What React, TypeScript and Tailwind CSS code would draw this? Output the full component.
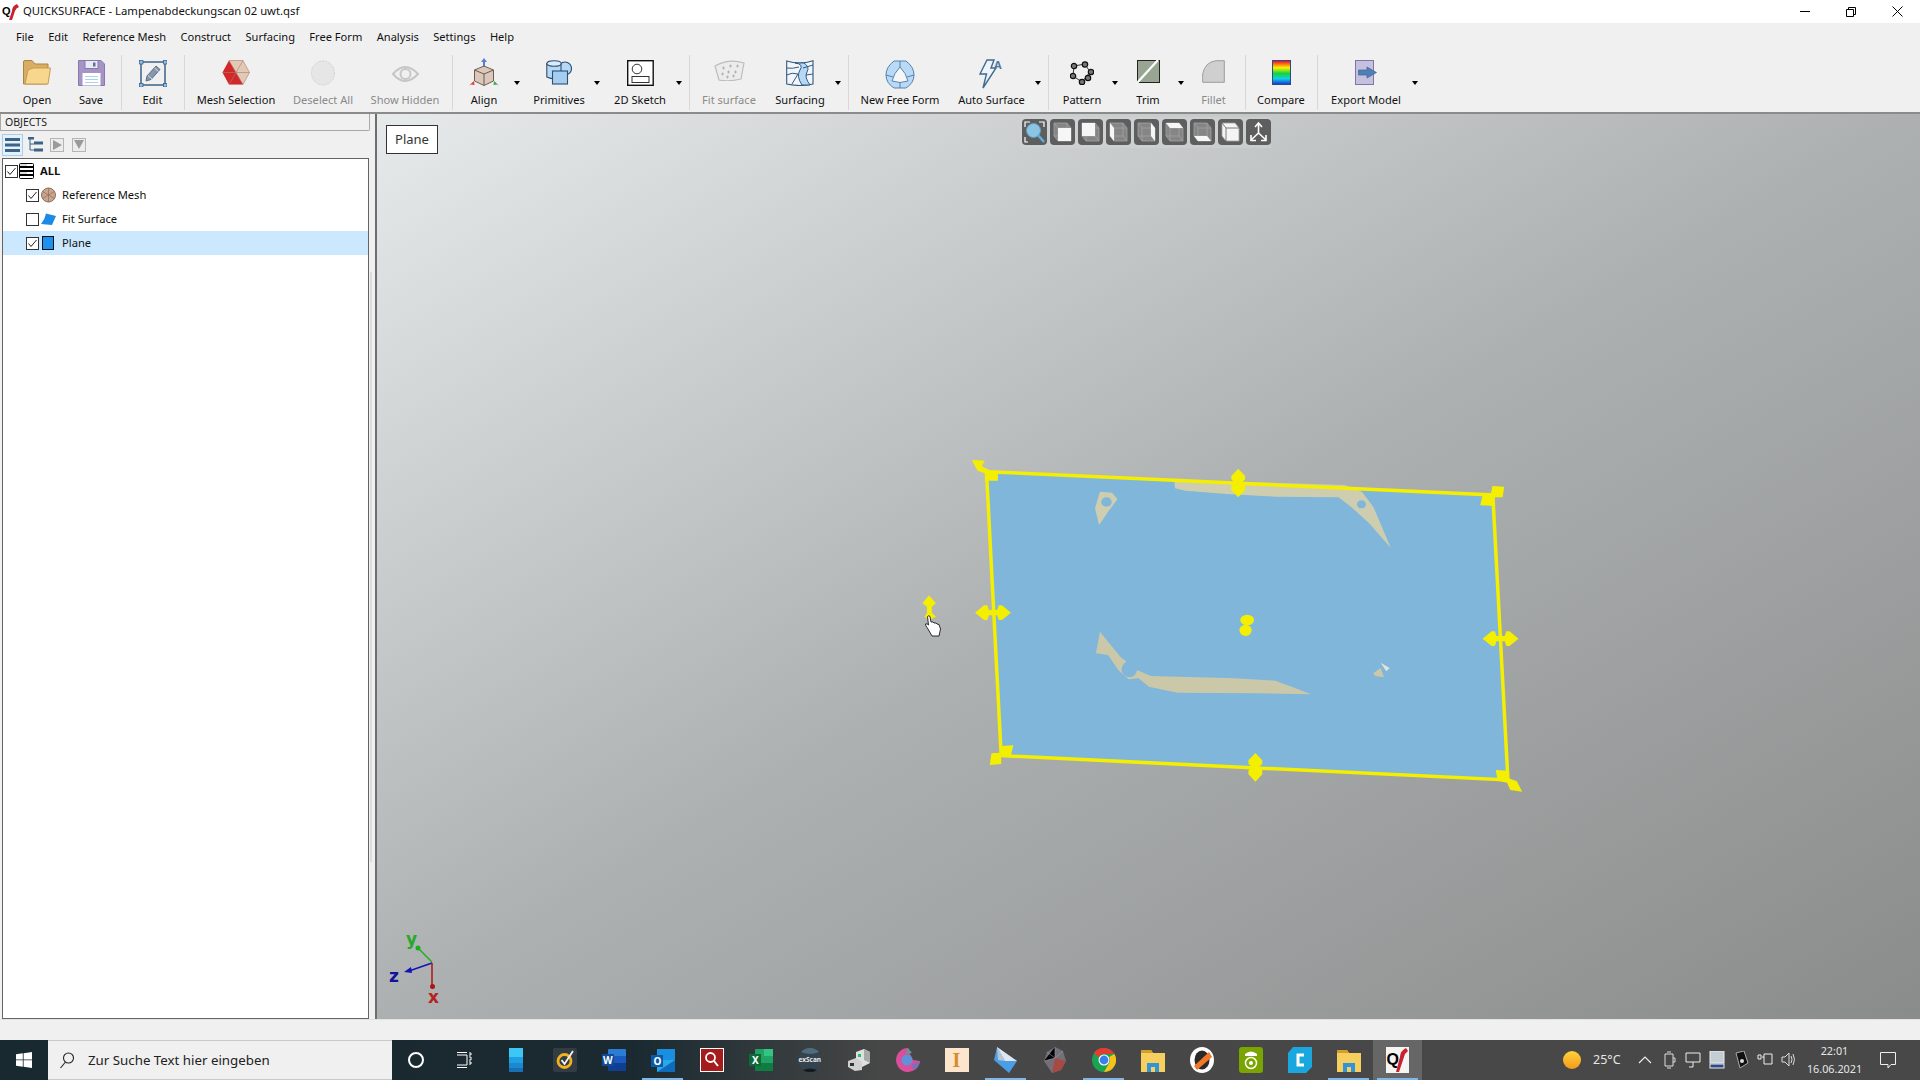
import type { ReactNode } from 'react';

const uiFont = "font-['Noto_Sans','Open_Sans',sans-serif]";

const menus = ['File', 'Edit', 'Reference Mesh', 'Construct', 'Surfacing', 'Free Form', 'Analysis', 'Settings', 'Help'];

const Sep = () => (
  <div className="w-[6px] h-[55px] mt-[5px] flex justify-center">
    <div className="w-px h-full bg-[#d8d8d8]" />
  </div>
);

const Caret = () => (
  <div className="w-[8px] h-full flex justify-center pt-[31px]">
    <div className="w-0 h-0 border-x-[3.5px] border-x-transparent border-t-[4px] border-t-black" />
  </div>
);

const Tool = ({ label, className, dim, children }: { label: string; className: string; dim?: boolean; children: ReactNode }) => (
  <div className={`h-full flex flex-col items-center shrink-0 ${className}`}>
    <div className="h-[36px] pt-[10px] flex justify-center">{children}</div>
    <div className={`text-[11.1px] leading-[16px] mt-[6px] whitespace-nowrap ${dim ? 'text-[#8a8a8a]' : 'text-[#111]'}`}>{label}</div>
  </div>
);

const IconOpen = () => (
  <svg width="28" height="25" viewBox="0 0 28 25">
    <path d="M0.500 24 V2 Q0.500 0.500 2 0.500 H9 L12 4 H25 V9 H26 L24 24 Z" fill="#d9ae62" stroke="#a98544" />
    <path d="M2 24 L5 10 L10 8 H27.500 L25 24 Z" fill="#f8d68e" stroke="#c49c55" />
  </svg>
);

const IconSave = () => (
  <svg width="27" height="26" viewBox="0 0 27 26">
    <path d="M0.500 0.500 H23 L26.500 4 V25.500 H0.500 Z" fill="#a594c6" stroke="#8a78ad" />
    <rect x="7" y="0.500" width="13" height="8" fill="#e6ecf4" stroke="#8a78ad" />
    <rect x="15" y="2.500" width="2.500" height="4" fill="#6d6a8a" />
    <rect x="4.500" y="13" width="18" height="12.500" fill="#fff" />
    <path d="M7 16.500 H20 M7 19.500 H20 M7 22.500 H20" stroke="#a9d4ee" />
  </svg>
);

const IconEdit = () => (
  <svg width="28" height="27" viewBox="0 0 28 27">
    <rect x="2" y="2" width="24" height="23" fill="none" stroke="#33587f" strokeWidth="1.400" />
    {[[2, 2], [26, 2], [2, 25], [26, 25]].map(([x, y]) => (
      <rect key={`${x}-${y}`} x={x - 1.500} y={y - 1.500} width="3.500" height="3.500" fill="#8fc0ea" stroke="#33587f" strokeWidth="0.700" />
    ))}
    <path d="M7 21 L8 16 L17 6 L21 9.500 L12 19.500 Z" fill="#8497ad" stroke="#5d7088" strokeWidth="1" />
    <path d="M9 15.500 L13 19 M15.500 8 L19.500 11.500" stroke="#e8edf2" strokeWidth="0.800" />
  </svg>
);

const IconMesh = () => (
  <svg width="28" height="25" viewBox="0 0 28 25">
    <path d="M7 0.500 H21 L27.500 12.500 L21 24.500 H7 L0.500 12.500 Z" fill="#e2c8b6" />
    <path d="M7 0.500 L14 12.500 L21 24.500 H7 L0.500 12.500 Z" fill="#d3282a" />
    <path d="M14 12.500 H27.500 M0.500 12.500 H14 M14 12.500 L21 0.500 M14 12.500 L21 24.500 M7 0.500 L14 12.500 L7 24.500 M7 0.500 H21 L27.500 12.500 L21 24.500" stroke="#a8806f" strokeWidth="0.600" fill="none" />
  </svg>
);

const IconDeselect = () => (
  <svg width="26" height="26" viewBox="0 0 26 26">
    <ellipse cx="13" cy="13" rx="11.500" ry="12" fill="#e6e6e6" stroke="#d2d2d2" strokeDasharray="2 1" />
  </svg>
);

const IconEye = () => (
  <svg width="27" height="18" viewBox="0 0 27 18">
    <path d="M1 9 Q13 -5 26 9 Q13 23 1 9 Z" fill="none" stroke="#c6c6c6" strokeWidth="2" />
    <circle cx="13.500" cy="9" r="5" fill="none" stroke="#c6c6c6" strokeWidth="2" />
  </svg>
);

const IconAlign = () => (
  <svg width="32" height="28" viewBox="0 0 32 28" className="-mt-[2px]">
    <path d="M16 0 L19 4 H17 V9 H15 V4 H13 Z" fill="#5a7fd0" />
    <path d="M16 8 L25.500 12 V23 L16 27.500 L6.500 23 V12 Z" fill="#dcc8ba" stroke="#5f4f45" strokeWidth="0.900" />
    <path d="M6.500 12 L16 16 L25.500 12 M16 16 V27.500" fill="none" stroke="#5f4f45" strokeWidth="0.900" />
    <path d="M1 27.500 L6 23 L6.500 27 L3 26.500 Z" fill="#e0403a" />
    <path d="M31 27.500 L26 23 L25.500 27 L29 26.500 Z" fill="#3fa84a" />
  </svg>
);

const IconPrimitives = () => (
  <svg width="26" height="25" viewBox="0 0 26 25">
    <circle cx="19" cy="8.500" r="6.500" fill="#b5d8f5" stroke="#2f4f70" strokeWidth="1.100" />
    <path d="M0.800 3.500 V17 Q7 20 15 18 V3.500 Z" fill="#b5d8f5" stroke="#2f4f70" strokeWidth="1.100" />
    <ellipse cx="8" cy="3.500" rx="7.200" ry="2.800" fill="#d8ecfb" stroke="#2f4f70" strokeWidth="1.100" />
    <rect x="6.500" y="11" width="15" height="13" fill="#a5cdf0" stroke="#2f4f70" strokeWidth="1.100" />
  </svg>
);

const IconSketch = () => (
  <svg width="27" height="26" viewBox="0 0 27 26">
    <rect x="0.700" y="0.700" width="25.500" height="24.600" fill="#fff" stroke="#111" strokeWidth="1.400" />
    <circle cx="10" cy="9" r="4.800" fill="none" stroke="#333" />
    <rect x="5" y="16.500" width="17" height="6" fill="none" stroke="#333" />
  </svg>
);

const IconFit = () => (
  <svg width="31" height="21" viewBox="0 0 31 21">
    <path d="M1 6 Q15 -2 30 3 L27 19 Q15 22 5 20 Z" fill="#ececec" stroke="#bdbdbd" strokeWidth="1.200" />
    <path d="M8 8 h3 M9.500 6.500 v3 M15 6 h3 M16.500 4.500 v3 M22 6 h3 M23.500 4.500 v3 M7 14 h3 M8.500 12.500 v3 M13 12 h3 M14.500 10.500 v3 M20 12 h3 M21.500 10.500 v3 M12 17 h3 M13.500 15.500 v3 M18 16 h3 M19.500 14.500 v3" stroke="#a8a8a8" strokeWidth="0.800" />
  </svg>
);

const IconSurfacing = () => (
  <svg width="28" height="26" viewBox="0 0 28 26">
    <path d="M0.700 1 Q14 5 27 0.700 V24 Q14 27 0.700 24 Z" fill="#f2f6fa" stroke="#33587f" strokeWidth="1.100" />
    <path d="M9 3 Q18 4 14 10 Q10 16 16 25 H24 Q18 17 21 12 Q24 7 18 3 Z" fill="#b5d8f5" stroke="#33587f" />
    <path d="M0.700 8 Q6 9 13 7 M0.700 15 Q6 12 12 14 L6 24 M17 8 L27 5 M20 15 L27 14" fill="none" stroke="#33587f" />
  </svg>
);

const IconFreeForm = () => (
  <svg width="30" height="29" viewBox="0 0 30 29">
    <path d="M9 1 H21 Q29 7 29 15 Q29 23 21 28 H9 Q1 23 1 15 Q1 7 9 1 Z" fill="#b8daf7" stroke="#5582ad" />
    <path d="M15 7 Q21 13 23 21 Q15 24 7 21 Q9 13 15 7 Z" fill="#f6f6f6" stroke="#5582ad" />
    <path d="M15 1 V7 M1 15 L8 17 M29 15 L22 17 M15 23 V28" stroke="#5582ad" fill="none" />
  </svg>
);

const IconAuto = () => (
  <svg width="26" height="30" viewBox="0 0 26 30" className="-mt-[1px]">
    <path d="M8 1 H15 L12 9 H17 L4 29 L7.500 15 H1 Z" fill="#eef4fa" stroke="#3f6a91" strokeWidth="1.400" />
    <text x="15" y="10" fontSize="11" fontWeight="700" fill="#4d7aa5" fontFamily="Noto Sans, sans-serif">A</text>
  </svg>
);

const IconPattern = () => (
  <svg width="24" height="24" viewBox="0 0 24 24" className="mt-px">
    <path d="M4 5 L15 3 L20 11 L12 21 L3 15 Z" fill="none" stroke="#222" strokeWidth="0.900" />
    {[[4, 5], [15, 3.500], [21, 11], [18, 17], [12, 21], [3, 15]].map(([x, y]) => (
      <circle key={`${x}-${y}`} cx={x} cy={y} r="2.700" fill="#777" stroke="#111" strokeWidth="1.200" />
    ))}
  </svg>
);

const IconTrim = () => (
  <svg width="23" height="23" viewBox="0 0 23 23">
    <rect x="0.500" y="0.500" width="22" height="22" fill="#97a592" stroke="#222" />
    <path d="M21 0 L0 23" stroke="#fff" strokeWidth="2.200" />
  </svg>
);

const IconFillet = () => (
  <svg width="23" height="23" viewBox="0 0 23 23">
    <path d="M0.700 22.300 V14 Q3 2 14 0.700 H22.300 V22.300 Z" fill="#cfcfcf" stroke="#9d9d9d" />
  </svg>
);

const IconCompare = () => (
  <svg width="19" height="25" viewBox="0 0 19 25">
    <defs>
      <linearGradient id="rainbow" x1="0" y1="0" x2="0" y2="1">
        <stop offset="0.040" stopColor="#ee1c25" />
        <stop offset="0.300" stopColor="#fdf100" />
        <stop offset="0.540" stopColor="#12d43a" />
        <stop offset="0.760" stopColor="#10cfe8" />
        <stop offset="1" stopColor="#1a2cd0" />
      </linearGradient>
    </defs>
    <rect x="0.500" y="0.500" width="18" height="24" fill="url(#rainbow)" stroke="#2a4a8a" />
  </svg>
);

const IconExport = () => (
  <svg width="22" height="25" viewBox="0 0 22 25">
    <rect x="0.500" y="0.500" width="18" height="24" fill="#c4c0de" stroke="#8473a8" />
    <path d="M3.500 10 H12 V7 L21.500 12.500 L12 18 V15 H3.500 Z" fill="#4f7fb5" stroke="#3d6897" strokeWidth="0.700" />
  </svg>
);

const CheckBox = ({ on }: { on: boolean }) => (
  <div className="w-[13px] h-[13px] border border-[#333] bg-white shrink-0 flex items-center justify-center">
    {on && (
      <svg width="11" height="11" viewBox="0 0 11 11">
        <path d="M1.500 5.500 L4 8.500 L9.500 2" fill="none" stroke="#222" strokeWidth="1" />
      </svg>
    )}
  </div>
);

const viewFaces = [
  '8,9 21,9 21,22 8,22',
  '4,4 17,4 17,17 4,17',
  '4,4 8,9 8,22 4,17',
  '17,4 21,9 21,22 17,17',
  '4,4 17,4 21,9 8,9',
  '8,22 21,22 17,17 4,17',
];

const ViewCube = ({ face, iso }: { face?: string; iso?: boolean }) => (
  <div className="w-[25px] h-[26px] rounded-[4px] bg-[#5e5e5e] mr-[3px] shrink-0">
    <svg width="25" height="26" viewBox="0 0 25 26">
      <polygon points="4,4 17,4 21,9 21,22 8,22 4,17" fill={iso ? '#f4f4f4' : '#858585'} stroke="#a2a2a2" strokeWidth="0.800" />
      <path d="M8 22 V9 H21 M8 9 L4 4" stroke={iso ? '#5e5e5e' : '#a2a2a2'} strokeWidth="0.800" fill="none" />
      {!iso && <path d="M4 17 H17 V4 M17 17 L21 22" stroke="#a2a2a2" strokeWidth="0.800" fill="none" />}
      {face && <polygon points={face} fill="#f6f6f6" />}
    </svg>
  </div>
);

const VArrow = ({ x, y }: { x: number; y: number }) => (
  <polygon
    fill="#f4ee00"
    points={`${x},${y - 44} ${x + 17},${y - 22} ${x + 17},${y - 12} ${x + 9},${y - 2} ${x + 17},${y + 8} ${x + 17},${y + 20} ${x},${y + 42} ${x - 17},${y + 20} ${x - 17},${y + 8} ${x - 9},${y - 2} ${x - 17},${y - 12} ${x - 17},${y - 22}`}
  />
);

const HArrow = ({ x, y }: { x: number; y: number }) => (
  <polygon
    fill="#f4ee00"
    points={`${x - 44},${y} ${x - 22},${y - 22} ${x - 14},${y - 22} ${x - 10},${y - 8} ${x + 10},${y - 8} ${x + 14},${y - 22} ${x + 22},${y - 22} ${x + 44},${y} ${x + 22},${y + 22} ${x + 14},${y + 22} ${x + 10},${y + 8} ${x - 10},${y + 8} ${x - 14},${y + 22} ${x - 22},${y + 22}`}
  />
);

// the scene is written in the coordinates of the crop: 1 unit = 0.408px wide, 0.333px high
const Scene = () => (
  <svg className="absolute inset-0 w-full h-full" viewBox="377 114 1543 905">
    <g transform="translate(900 440) scale(0.408 0.3333)">
      <polygon points="212,95 1453,165 1490,1020 248,947" fill="#80b6d9" />
      {/* mesh pieces showing through the plane */}
      <polygon points="672,120 1090,135 1132,155 1160,200 1203,324 1150,250 1105,200 1075,172 920,170 800,162 700,152 674,145" fill="#cfcdb0" />
      <ellipse cx="1131" cy="193" rx="11" ry="12" fill="#80b6d9" />
      <polygon points="490,155 520,158 533,178 510,215 488,255 478,205" fill="#cfcdb0" />
      <ellipse cx="506" cy="186" rx="13" ry="14" fill="#80b6d9" />
      <polygon points="490,575 540,650 580,690 615,708 820,715 920,722 960,740 1008,763 880,760 680,758 610,740 585,715 560,718 535,690 510,645 480,640 485,610" fill="#cbc8aa" />
      <ellipse cx="562" cy="688" rx="19" ry="24" fill="#80b6d9" />
      <polygon points="1160,700 1178,684 1186,712 1165,708" fill="#cbc8aa" />
      <polygon points="1178,668 1200,684 1192,694" fill="#e4e4d6" />
      <polygon points="212,95 1453,165 1490,1020 248,947" fill="none" stroke="#f4ee00" strokeWidth="3.500" vectorEffect="non-scaling-stroke" />
      {/* corner handles */}
      <polygon points="176,60 208,62 200,78 222,92 240,92 240,122 208,122 208,100 190,92" fill="#f4ee00" />
      <polygon points="1481,140 1477,172 1458,172 1455,198 1422,196 1428,165 1448,163 1452,138" fill="#f4ee00" />
      <polygon points="278,916 272,945 248,948 248,972 220,975 224,940 245,938 248,918" fill="#f4ee00" />
      <polygon points="1460,990 1492,992 1492,1015 1512,1024 1525,1055 1496,1050 1488,1028 1465,1022" fill="#f4ee00" />
      <VArrow x={829} y={130} />
      <VArrow x={871} y={983} />
      <HArrow x={228} y={518} />
      <HArrow x={1472} y={596} />
      <ellipse cx="851" cy="540" rx="17" ry="16" fill="#f4ee00" />
      <ellipse cx="847" cy="571" rx="15" ry="17" fill="#f4ee00" />
      <polygon points="71,466 88,490 78,500 78,518 88,530 72,540 60,530 66,518 66,500 55,490" fill="#f4ee00" />
    </g>
    {/* cursor */}
    <path d="M927.500 616.500 Q929 615 930 616.500 L931 622 H933 L934 623 H936 L937 624 L939 624.500 L940.500 629 L939 636 H932 L928 629 Q925 625 925.500 624 Q927 623 928.500 625 Z" fill="#fff" stroke="#000" strokeWidth="0.800" />
    {/* axis */}
    <path d="M432 962 L418 948" stroke="#22b022" strokeWidth="1.500" />
    <circle cx="418" cy="948" r="2.500" fill="#18b018" />
    <path d="M432 963 L409 971" stroke="#1212b8" strokeWidth="1.500" />
    <path d="M404 972 L411 967 L412 973 Z" fill="#1212b8" />
    <path d="M432 963 V986" stroke="#b01414" strokeWidth="1.500" />
    <circle cx="432.500" cy="986.500" r="2.500" fill="#b01414" />
    <text x="406" y="945" fontSize="17" fontWeight="700" fill="#28a828" fontFamily="DejaVu Sans, sans-serif">y</text>
    <text x="389" y="982" fontSize="17" fontWeight="700" fill="#12129a" fontFamily="DejaVu Sans, sans-serif">z</text>
    <text x="428" y="1003" fontSize="17" fontWeight="700" fill="#b82020" fontFamily="DejaVu Sans, sans-serif">x</text>
  </svg>
);

const Cell = ({ active, lit, children }: { active?: boolean; lit?: boolean; children: ReactNode }) => (
  <div className={`relative w-[49px] h-full shrink-0 flex items-center justify-center ${lit ? 'bg-[#666666]' : ''}`}>
    {children}
    {active && <div className="absolute bottom-0 inset-x-[4px] h-[2px] bg-[#7fb8e8]" />}
  </div>
);

const FolderTask = () => (
  <svg width="24" height="24" viewBox="0 0 24 24">
    <path d="M0 2 H10 L12 5 H24 V24 H0 Z" fill="#f7cf5e" />
    <path d="M0 2 H10 L12 5 H0 Z" fill="#d49e28" />
    <path d="M6 24 V15 H18 V24 H14 V19 H10 V24 Z" fill="#2f95d8" />
  </svg>
);

const taskIcons: { key: string; active?: boolean; lit?: boolean; icon: ReactNode }[] = [
  { key: 'notes', icon: <svg width="14" height="24" viewBox="0 0 14 24"><rect width="14" height="24" rx="1" fill="#1d88d0" /><rect width="14" height="9" fill="#3cc8f4" /><rect y="9" width="14" height="6" fill="#1fa0e4" /><rect y="20" width="14" height="4" fill="#1770b4" /></svg> },
  { key: 'norton', icon: <svg width="24" height="24" viewBox="0 0 24 24"><rect width="24" height="24" rx="2" fill="#333c44" /><circle cx="11.500" cy="13" r="6.500" fill="none" stroke="#f1b21a" strokeWidth="2.800" /><path d="M8.500 12 L11.500 16 L20 3" fill="none" stroke="#f4f4f4" strokeWidth="1.800" /></svg> },
  { key: 'word', icon: <svg width="24" height="22" viewBox="0 0 24 22"><rect x="6" width="18" height="22" rx="1" fill="#2b7cd3" /><rect x="6" y="7" width="18" height="7" fill="#185abd" /><rect x="6" y="14" width="18" height="8" fill="#103f91" /><rect x="0" y="5" width="12" height="12" fill="#124a9c" /><text x="1" y="15" fontSize="10" fontWeight="700" fill="#fff" fontFamily="Noto Sans, sans-serif">W</text></svg> },
  { key: 'outlook', active: true, icon: <svg width="24" height="23" viewBox="0 0 24 23"><rect x="6" width="18" height="12" fill="#1a8ee0" /><path d="M6 11 L24 11 V23 H6 Z" fill="#28a8ea" /><path d="M6 23 L24 11 V23 Z" fill="#0f6cbd" /><rect x="0" y="6" width="12" height="12" fill="#0a5aa8" /><text x="2.500" y="16" fontSize="10" fontWeight="700" fill="#fff" fontFamily="Noto Sans, sans-serif">O</text></svg> },
  { key: 'search', icon: <svg width="24" height="24" viewBox="0 0 24 24"><rect x="0.500" y="0.500" width="23" height="23" fill="#a61c1c" stroke="#fff" /><circle cx="10.500" cy="9.500" r="4.500" fill="none" stroke="#fff" strokeWidth="1.800" /><path d="M14 13 L18 18" stroke="#fff" strokeWidth="2" /></svg> },
  { key: 'excel', icon: <svg width="24" height="22" viewBox="0 0 24 22"><rect x="6" width="18" height="22" rx="1" fill="#21a366" /><rect x="15" width="9" height="7" fill="#33c481" /><rect x="6" y="14" width="18" height="8" fill="#107c41" /><rect x="0" y="5" width="12" height="12" fill="#0e6b38" /><text x="3" y="15" fontSize="10" fontWeight="700" fill="#fff" fontFamily="Noto Sans, sans-serif">X</text></svg> },
  { key: 'exscan', icon: <svg width="24" height="24" viewBox="0 0 24 24"><circle cx="12" cy="12" r="12" fill="#34434e" /><path d="M3 4 A12 12 0 0 1 21 4 Q12 8 3 4" fill="#4f6b7e" /><path d="M5 22 A12 12 0 0 0 19 22 Q12 19 5 22" fill="#141a1f" /><text x="0.500" y="13.500" fontSize="6.500" fontWeight="700" fill="#e8e8e8" fontFamily="Noto Sans, sans-serif">exScan</text></svg> },
  { key: 'scanner', icon: <svg width="22" height="22" viewBox="0 0 22 22"><path d="M8 3 L16 0 L22 3 V14 L14 18 L8 14 Z" fill="#e0e0e0" /><path d="M16 0 L22 3 V14 L16 11 Z" fill="#a8a8a8" /><path d="M0 12 L8 9 L14 13 V21 L7 22 L0 18 Z" fill="#d0d0d0" /><rect x="2" y="14" width="4" height="3" fill="#333" /><rect x="10" y="5" width="3" height="3" fill="#1c6" /></svg> },
  { key: 'orb', icon: <svg width="24" height="24" viewBox="0 0 24 24"><path d="M12 0 A12 12 0 1 0 24 13 L17 12 L14 6 Z" fill="#d94f9a" /><path d="M12 0 L16 5 L10 6 Z" fill="#5aa08a" /><circle cx="11" cy="12" r="5.500" fill="#5f92d8" /><path d="M16 16 L24 13 Q23 20 17 22 Z" fill="#7b6fb8" /></svg> },
  { key: 'inventor', icon: <div className="w-[24px] h-[24px] bg-[#fbe6cd] flex items-center justify-center text-[20px] leading-[24px] font-bold text-[#d98a2a] font-['Liberation_Serif',serif]">I</div> },
  { key: 'polar', active: true, icon: <svg width="24" height="26" viewBox="0 0 24 26"><path d="M3 0 L23 14 L15 26 L0 13 Z" fill="#4a9ee8" /><path d="M3 0 L11 14 L23 14 Z" fill="#dfe6ee" /><path d="M3 0 L11 14 L4 13 Z" fill="#b8c4d0" /></svg> },
  { key: 'gem', icon: <svg width="22" height="26" viewBox="0 0 22 26"><polygon points="11,0 19,4 22,14 17,23 8,26 0,14 3,5" fill="#74707a" /><polygon points="11,11 22,14 17,23 8,26" fill="#a84a44" /><path d="M11 0 V11 L0 14 M11 11 L3 5 M11 11 L19 4" stroke="#9a98a0" strokeWidth="0.600" /></svg> },
  { key: 'chrome', active: true, icon: <svg width="24" height="24" viewBox="0 0 24 24"><circle cx="12" cy="12" r="12" fill="#1aa350" /><path d="M12 0 A12 12 0 0 1 22.400 6 H12 A6 6 0 0 0 6.500 9.500 L2 4.800 A12 12 0 0 1 12 0" fill="#e23d30" /><path d="M22.400 6 A12 12 0 0 1 12 24 L17.200 15 A6 6 0 0 0 17.200 9 Z" fill="#fbc117" /><circle cx="12" cy="12" r="5.500" fill="#fff" /><circle cx="12" cy="12" r="4.400" fill="#3b7fe8" /></svg> },
  { key: 'files', icon: <FolderTask /> },
  { key: 'pdf', icon: <svg width="24" height="26" viewBox="0 0 24 26"><ellipse cx="12" cy="13" rx="12" ry="13" fill="#fff" /><ellipse cx="12" cy="13" rx="7.500" ry="9.500" fill="#2a2a2a" /><path d="M19 5 L22 10 L7 23 L4 19 Z" fill="#f07828" /></svg> },
  { key: 'android', icon: <svg width="24" height="26" viewBox="0 0 24 26"><rect width="24" height="26" rx="3" fill="#7aa400" /><circle cx="12" cy="16" r="5.500" fill="none" stroke="#fff" strokeWidth="1.500" /><circle cx="12" cy="16" r="2" fill="#fff" /><path d="M6 9 H18 V7 Q12 2 6 7 Z" fill="#fff" /></svg> },
  { key: 'cura', icon: <svg width="24" height="26" viewBox="0 0 24 26"><polygon points="5,0 24,0 24,20 18,26 0,26 0,6" fill="#1aa7e0" /><path d="M16 8 H10 V18 H16" fill="none" stroke="#fff" strokeWidth="3" /></svg> },
  { key: 'files2', active: true, icon: <FolderTask /> },
  { key: 'qs', active: true, lit: true, icon: <svg width="23" height="26" viewBox="0 0 23 26"><rect width="23" height="26" fill="#f4f4f4" /><text x="0.500" y="18" fontSize="16" fontWeight="700" fill="#000" fontFamily="Liberation Sans, sans-serif">Q</text><path d="M20 1 Q14 4 14 10 L10 25 H13 L18 10 Q19 6 22 4 Z" fill="#c8232a" /></svg> },
];

const trayIcons = [
  <path key="a" d="M4 3 H12 V15 H4 Z M6 1 H10 M6 17 H10 M12 7 H14 V11 H12" fill="none" stroke="#ddd" />,
  <path key="b" d="M1 2 H15 V11 H1 Z M8 11 V16 M4 16 H8" fill="none" stroke="#eee" />,
  <g key="c"><rect x="1" y="0" width="14" height="12" fill="#c4ccd4" stroke="#eee" /><rect x="1" y="13" width="14" height="4" fill="#2a4a8a" stroke="#eee" /></g>,
  <g key="d"><path d="M3 2 L11 0 L15 12 L7 17 Z" fill="#111" stroke="#aaa" /><circle cx="9" cy="10" r="2" fill="#ddd" /></g>,
  <path key="e" d="M1 4 V8 H4 V4 Z M5 6 H7 M7 3 H15 V13 H7 Z" fill="none" stroke="#eee" />,
  <path key="f" d="M1 6 V11 H4 L8 15 V2 L4 6 Z M10 5 Q12 8.500 10 12 M12 3 Q15 8.500 12 14" fill="none" stroke="#ddd" />,
];

export default function App() {
  return (
    <div className={`w-[1920px] h-[1080px] overflow-hidden flex flex-col bg-[#f0f0f0] text-[#111] ${uiFont}`}>
      {/* Title bar */}
      <div className="h-[23px] bg-white flex items-center shrink-0">
        <svg width="18" height="16" viewBox="0 0 18 16" className="ml-[2px]">
          <rect width="18" height="16" fill="#fff" />
          <text x="0" y="11" fontSize="11" fontWeight="700" fill="#000" fontFamily="Liberation Sans, sans-serif">Q</text>
          <path d="M15 0 Q10 2 10 7 L7 16 H10 L13 7 Q14 4 17 3 Z" fill="#c8232a" />
        </svg>
        <span className="ml-[3px] text-[11.3px]">QUICKSURFACE - Lampenabdeckungscan 02 uwt.qsf</span>
        <div className="ml-auto flex h-full items-center">
          <div className="w-[46px] flex justify-center"><div className="w-[10px] h-px bg-black" /></div>
          <div className="w-[46px] flex justify-center">
            <svg width="10" height="10" viewBox="0 0 10 10"><path d="M0.500 2.500 H7.500 V9.500 H0.500 Z M2.500 2.500 V0.500 H9.500 V7.500 H7.500" fill="none" stroke="#000" /></svg>
          </div>
          <div className="w-[46px] flex justify-center">
            <svg width="11" height="11" viewBox="0 0 11 11"><path d="M0.500 0.500 L10.500 10.500 M10.500 0.500 L0.500 10.500" stroke="#000" /></svg>
          </div>
        </div>
      </div>

      {/* Menu bar */}
      <div className="h-[27px] flex items-center pl-[16px] pt-[2px] gap-[14.4px] shrink-0 text-[11.1px]">
        {menus.map((m) => <span key={m}>{m}</span>)}
      </div>

      {/* Toolbar */}
      <div className="h-[64px] flex pl-[10px] shrink-0 border-b-2 border-[#8b8b8b]">
        <Tool label="Open" className="w-[54px]"><IconOpen /></Tool>
        <Tool label="Save" className="w-[54px]"><IconSave /></Tool>
        <Sep />
        <Tool label="Edit" className="w-[57px]"><IconEdit /></Tool>
        <Sep />
        <Tool label="Mesh Selection" className="w-[98px]"><IconMesh /></Tool>
        <Tool label="Deselect All" className="w-[76px]" dim><IconDeselect /></Tool>
        <Tool label="Show Hidden" className="w-[88px]" dim><div className="pt-[5px]"><IconEye /></div></Tool>
        <Sep />
        <Tool label="Align" className="w-[58px]"><IconAlign /></Tool>
        <Caret />
        <Tool label="Primitives" className="w-[68px] ml-[4px]"><IconPrimitives /></Tool>
        <Caret />
        <Tool label="2D Sketch" className="w-[70px] ml-[4px]"><IconSketch /></Tool>
        <Caret />
        <div className="ml-[3px]"><Sep /></div>
        <Tool label="Fit surface" className="w-[74px]" dim><IconFit /></Tool>
        <Tool label="Surfacing" className="w-[68px]"><IconSurfacing /></Tool>
        <Caret />
        <div className="ml-[3px]"><Sep /></div>
        <Tool label="New Free Form" className="w-[98px]"><IconFreeForm /></Tool>
        <Tool label="Auto Surface" className="w-[85px]"><IconAuto /></Tool>
        <Caret />
        <div className="ml-[3px]"><Sep /></div>
        <Tool label="Pattern" className="w-[58px] ml-[2px]"><IconPattern /></Tool>
        <Caret />
        <Tool label="Trim" className="w-[58px]"><IconTrim /></Tool>
        <Caret />
        <Tool label="Fillet" className="w-[57px]" dim><IconFillet /></Tool>
        <Sep />
        <Tool label="Compare" className="w-[66px]"><IconCompare /></Tool>
        <Sep />
        <Tool label="Export Model" className="w-[90px] ml-[1px]"><IconExport /></Tool>
        <Caret />
      </div>

      {/* Workspace */}
      <div className="flex-1 min-h-0 flex">
        {/* Objects panel */}
        <div className="w-[370px] shrink-0 flex flex-col">
          <div className="h-[17px] border border-t-0 border-[#a8a8a8] rounded-br-[2px] text-[10.500px] leading-[16px] pl-[4px] text-[#222]">OBJECTS</div>
          <div className="h-[27px] flex items-center pl-[2px]">
            <div className="w-[21px] h-[22px] bg-[#e4f0fa] border border-[#a8cdec] flex items-center justify-center">
              <svg width="15" height="14" viewBox="0 0 15 14"><path d="M0 1.500 H15 M0 7 H15 M0 12.500 H15" stroke="#3c6285" strokeWidth="3" /></svg>
            </div>
            <svg width="15" height="16" viewBox="0 0 15 16" className="ml-[5px]">
              <path d="M2 1 V13 H6 M2 7 H6" fill="none" stroke="#3c6285" />
              <path d="M0 1 H6 M6 6 H15 M6 13 H15" stroke="#3c6285" strokeWidth="3" />
            </svg>
            <div className="ml-[7px] w-[14px] h-[14px] bg-[#ececec] border border-[#b5b5b5] flex items-center justify-center">
              <div className="w-0 h-0 border-y-[5px] border-y-transparent border-l-[9px] border-l-[#9a9a9a]" />
            </div>
            <div className="ml-[8px] w-[14px] h-[14px] bg-[#ececec] border border-[#b5b5b5] flex items-center justify-center">
              <div className="w-0 h-0 border-x-[5px] border-x-transparent border-t-[9px] border-t-[#9a9a9a]" />
            </div>
          </div>
          <div className="flex-1 ml-[2px] mr-[1px] border border-[#646464] bg-white text-[11.200px]">
            <div className="h-[24px] flex items-center pl-[2px]">
              <CheckBox on />
              <svg width="15" height="16" viewBox="0 0 15 16" className="ml-px">
                <rect x="0.500" y="0.500" width="14" height="15" rx="1" fill="#fff" stroke="#000" />
                <path d="M1 4 H14 M1 8 H14 M1 12 H14" stroke="#000" strokeWidth="2" />
                <path d="M1 2 H8 M1 10 H8" stroke="#bbb" />
              </svg>
              <span className="ml-[6px] font-bold">ALL</span>
            </div>
            <div className="h-[24px] flex items-center pl-[23px]">
              <CheckBox on />
              <svg width="15" height="16" viewBox="0 0 15 16" className="ml-[2px]">
                <circle cx="7.500" cy="8" r="7" fill="#c9a58e" stroke="#8d6e5b" />
                <path d="M7.500 1 V15 M1.500 4.500 L13.500 11.500 M13.500 4.500 L1.500 11.500" stroke="#8d6e5b" strokeWidth="0.700" />
              </svg>
              <span className="ml-[6px]">Reference Mesh</span>
            </div>
            <div className="h-[24px] flex items-center pl-[23px]">
              <CheckBox on={false} />
              <svg width="15" height="13" viewBox="0 0 15 13" className="ml-[2px]">
                <path d="M5 0.500 L15 3 L11 12 L0 11 Q4 6 5 0.500 Z" fill="#1e8ae6" />
              </svg>
              <span className="ml-[6px]">Fit Surface</span>
            </div>
            <div className="h-[24px] flex items-center pl-[23px] bg-[#cce8ff]">
              <CheckBox on />
              <div className="ml-[3px] w-[12px] h-[14px] bg-[#1e90f0] border border-[#111]" />
              <span className="ml-[8px]">Plane</span>
            </div>
          </div>
        </div>

        {/* Splitter */}
        <div className="w-[5px] shrink-0 flex flex-col justify-center">
          <div className="h-[590px] border-x border-[#dcdcdc] w-[2px]" />
        </div>

        {/* Viewport */}
        <div className="relative flex-1 min-w-0 border-l-2 border-[#6e6e6e] bg-[linear-gradient(to_bottom_right,#e7eaea_0%,#adb0b0_50%,#8a8c8c_100%)]">
          <Scene />
          <div className="absolute left-[9px] top-[11px] w-[52px] h-[29px] border border-[#333] bg-white flex items-center justify-center text-[13px] text-[#333]">Plane</div>
          <div className="absolute left-[643px] top-[3px] h-[31px] pl-[2px] pt-[2px] flex bg-[#d5d7d7]/40">
            <div className="w-[25px] h-[26px] rounded-[4px] bg-[#5e5e5e] mr-[3px] shrink-0">
              <svg width="25" height="26" viewBox="0 0 25 26">
                <path d="M3 8 V3 H8 M17 3 H22 V8 M3 18 V23 H6" fill="none" stroke="#fff" strokeWidth="1.200" />
                <circle cx="11.500" cy="11.500" r="7" fill="#8cc5e4" stroke="#5f9fc4" />
                <path d="M16 16 L22 23" stroke="#5fb0de" strokeWidth="2.500" />
              </svg>
            </div>
            {viewFaces.map((f) => <ViewCube key={f} face={f} />)}
            <ViewCube iso />
            <div className="w-[25px] h-[26px] rounded-[4px] bg-[#5e5e5e] shrink-0">
              <svg width="25" height="26" viewBox="0 0 25 26">
                <path d="M12.500 14 V5 M9 8 L12.500 4 L16 8 M12.500 14 L5 21 M5 16 V21.500 H10 M12.500 14 L20 21 M20 16 V21.500 H15" fill="none" stroke="#fff" strokeWidth="1.600" />
              </svg>
            </div>
          </div>
        </div>
      </div>

      {/* Status strip */}
      <div className="h-[21px] shrink-0 border-t border-[#e2e2e2]" />

      {/* Taskbar */}
      <div className="h-[40px] shrink-0 flex items-center bg-[linear-gradient(to_right,#18292f_0%,#1a2a30_33%,#474747_46%,#484848_100%)] text-white">
        <div className="w-[48px] h-full flex items-center justify-center">
          <svg width="16" height="16" viewBox="0 0 16 16"><path d="M0 2.300 L6.800 1.300 V7.500 H0 Z M7.600 1.200 L16 0 V7.500 H7.600 Z M0 8.300 H6.800 V14.700 L0 13.700 Z M7.600 8.300 H16 V16 L7.600 14.800 Z" fill="#fff" /></svg>
        </div>
        <div className="w-[344px] h-full bg-[#f0f0f0] border-y border-[#c8c8c8] flex items-center pl-[11px] text-[#222]">
          <svg width="16" height="17" viewBox="0 0 16 17"><circle cx="9.500" cy="6" r="5" fill="none" stroke="#222" strokeWidth="1.100" /><path d="M6.500 10 L1.500 16" stroke="#222" strokeWidth="1.100" /></svg>
          <span className="ml-[13px] pt-px text-[13.300px]">Zur Suche Text hier eingeben</span>
        </div>
        <div className="w-[48px] h-full flex items-center justify-center">
          <div className="w-[16px] h-[16px] rounded-full border-2 border-white" />
        </div>
        <div className="w-[48px] h-full flex items-center justify-center">
          <svg width="16" height="16" viewBox="0 0 16 16"><path d="M1 3 H11 V13 H1 M1 0.500 H11 M1 15.500 H11 M13 5 H15 V8 H13 M13 1 H15 V3 H13 M13 10 H15 V12 H13" fill="none" stroke="#fff" strokeWidth="1" /></svg>
        </div>
        <div className="w-[3px] shrink-0" />
        {taskIcons.map((t) => (
          <Cell key={t.key} active={t.active} lit={t.lit}>{t.icon}</Cell>
        ))}
        <div className="ml-auto h-full flex items-center pr-[12px] text-[#e6e6e6]">
          <div className="w-[18px] h-[18px] rounded-full bg-[linear-gradient(to_bottom,#ffd23a,#f49a1c)]" />
          <span className="ml-[12px] w-[40px] text-[12.500px] whitespace-nowrap">25°C</span>
          <div className="w-[24px] flex justify-center">
            <svg width="14" height="8" viewBox="0 0 14 8"><path d="M1 7 L7 1 L13 7" fill="none" stroke="#eee" strokeWidth="1.200" /></svg>
          </div>
          {trayIcons.map((p) => (
            <div key={p.key} className="w-[24px] flex justify-center">
              <svg width="16" height="18" viewBox="0 0 16 18">{p}</svg>
            </div>
          ))}
          <div className="w-[67px] text-center text-[10.800px] leading-[18px]">
            <div>22:01</div>
            <div>16.06.2021</div>
          </div>
          <div className="w-[40px] flex justify-center">
            <svg width="16" height="17" viewBox="0 0 16 17"><path d="M0.500 0.500 H15.500 V12.500 H11 L8 16 V12.500 H0.500 Z" fill="none" stroke="#eee" /></svg>
          </div>
        </div>
      </div>
    </div>
  );
}
